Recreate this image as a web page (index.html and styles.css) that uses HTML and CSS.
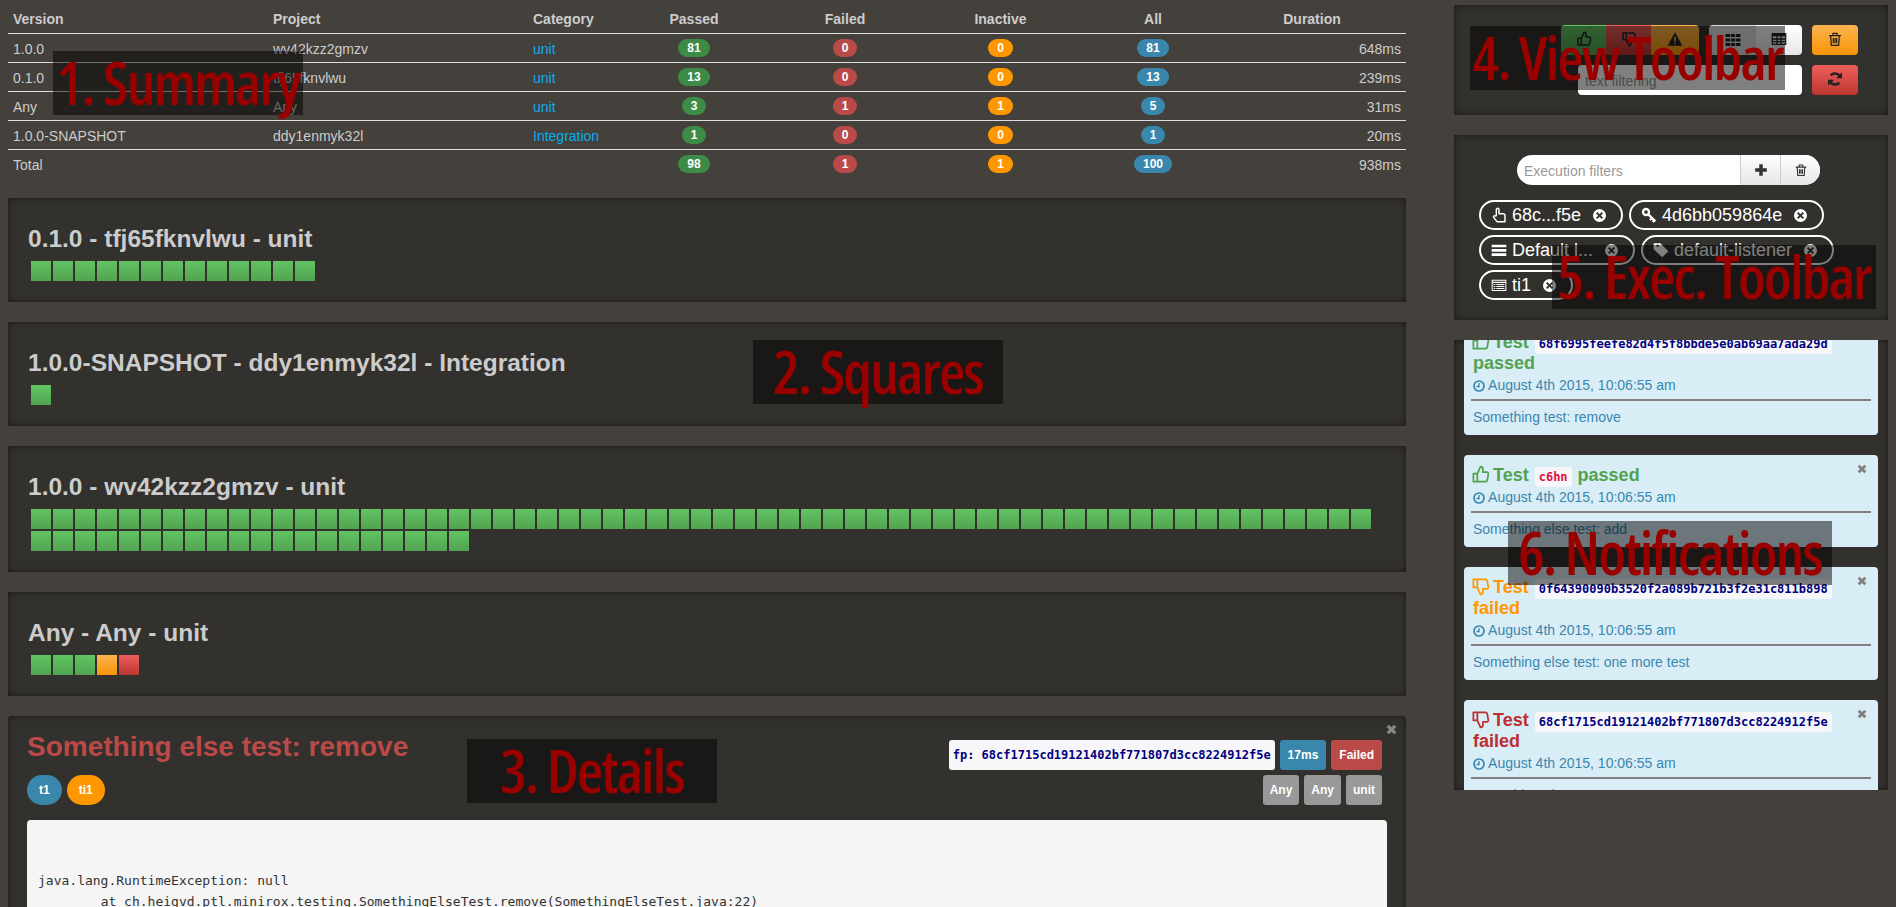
FILE: index.html
```html
<!DOCTYPE html>
<html lang="en">
<head>
    <meta charset="UTF-8">
    <meta name="viewport" content="width=device-width, initial-scale=1.0">
    <title>Test report</title>
    <link rel="stylesheet" href="styles.css">
</head>
<body>
    <!-- icon sprite -->
    <svg class="sprite" xmlns="http://www.w3.org/2000/svg">
        <symbol id="i-up" viewBox="0 0 24 24"><path d="M8 11v10H3V11zM8 11l4-9c1.800 0 3 1.300 3 3v4h5c1.300 0 2.100 1.100 1.900 2.300l-1.400 7.700c-.2 1.100-1 2-2.100 2H8" fill="none" stroke="currentColor" stroke-width="2.200" stroke-linejoin="round"/></symbol>
        <symbol id="i-down" viewBox="0 0 24 24"><path d="M8 13V3H3v10zM8 13l4 9c1.800 0 3-1.300 3-3v-4h5c1.300 0 2.100-1.100 1.900-2.300L20.500 5c-.2-1.100-1-2-2.100-2H8" fill="none" stroke="currentColor" stroke-width="2.200" stroke-linejoin="round"/></symbol>
        <symbol id="i-warn" viewBox="0 0 24 24"><path fill-rule="evenodd" fill="currentColor" d="M12 2l11 20H1zM10.600 9l.4 7h2l.4-7zM11 17.500v2.500h2v-2.500z"/></symbol>
        <symbol id="i-th" viewBox="0 0 24 24"><path fill="currentColor" d="M2 4h6v4H2zM9 4h6v4H9zM16 4h6v4h-6zM2 10h6v4H2zM9 10h6v4H9zM16 10h6v4h-6zM2 16h6v4H2zM9 16h6v4H9zM16 16h6v4h-6z"/></symbol>
        <symbol id="i-table" viewBox="0 0 24 24"><path fill-rule="evenodd" fill="currentColor" d="M1 3h22v18H1zM3 8v3h5V8zM10 8v3h4V8zM16 8v3h5V8zM3 13v2h5v-2zM10 13v2h4v-2zM16 13v2h5v-2zM3 17v2h5v-2zM10 17v2h4v-2zM16 17v2h5v-2z"/></symbol>
        <symbol id="i-trash" viewBox="0 0 24 24"><path d="M3 7h18M9 7V3.500h6V7M5.500 7l1 14.500h11l1-14.500M9.500 10.500v8M12 10.500v8M14.500 10.500v8" fill="none" stroke="currentColor" stroke-width="1.900"/></symbol>
        <symbol id="i-refresh" viewBox="0 0 24 24"><path d="M20 10A8.500 8.500 0 0 0 5.500 6.500M4 14a8.500 8.500 0 0 0 14.500 3.500" fill="none" stroke="currentColor" stroke-width="3.600"/><path fill="currentColor" d="M22.500 2v9h-9zM1.500 22v-9h9z"/></symbol>
        <symbol id="i-plus" viewBox="0 0 24 24"><path fill="currentColor" d="M9 2h6v7h7v6h-7v7H9v-7H2V9h7z"/></symbol>
        <symbol id="i-hand" viewBox="0 0 24 24"><path d="M8 13V4a2 2 0 0 1 4 0v6h6a3 3 0 0 1 3 3v9H9l-5-6.500c-1-1.500 1-3.300 2.500-1.900z" fill="none" stroke="currentColor" stroke-width="2.200" stroke-linejoin="round"/></symbol>
        <symbol id="i-key" viewBox="0 0 24 24"><circle cx="7.500" cy="7.500" r="4.500" fill="none" stroke="currentColor" stroke-width="3.400"/><path d="M11 11l10.500 10.500M16.500 16.500l-3 3M20 20l-2.500 2.500" fill="none" stroke="currentColor" stroke-width="3.400"/></symbol>
        <symbol id="i-bars" viewBox="0 0 24 24"><path fill="currentColor" d="M1 4h22v4H1zM1 10.500h22v4H1zM1 17h22v4H1z"/></symbol>
        <symbol id="i-tag" viewBox="0 0 24 24"><path fill-rule="evenodd" fill="currentColor" d="M1 2h10l12 12-9 9L1 11zM5 5.500a1.800 1.800 0 1 0 3.600 0 1.800 1.800 0 1 0-3.600 0z"/></symbol>
        <symbol id="i-list" viewBox="0 0 24 24"><path fill-rule="evenodd" fill="currentColor" d="M1 4h22v17H1zM2.500 5.500V7h19V5.500zM2.500 9v10.500h19V9zM4 10.500h2.500V12H4zM8 10.500h12V12H8zM4 13.500h2.500V15H4zM8 13.500h12V15H8zM4 16.500h2.500V18H4zM8 16.500h12V18H8z"/></symbol>
        <symbol id="i-xc" viewBox="0 0 24 24"><path fill-rule="evenodd" fill="currentColor" d="M12 0a12 12 0 1 0 0 24 12 12 0 1 0 0-24zM8 5.500L12 9.500l4-4 2.500 2.500-4 4 4 4-2.500 2.500-4-4-4 4L5.500 16l4-4-4-4z"/></symbol>
        <symbol id="i-clock" viewBox="0 0 24 24"><circle cx="12" cy="12" r="10" fill="none" stroke="currentColor" stroke-width="3.400"/><path d="M12 6v7h-5" fill="none" stroke="currentColor" stroke-width="2.600"/></symbol>
        <symbol id="i-close" viewBox="0 0 24 24"><path d="M4 4l16 16M20 4L4 20" fill="none" stroke="currentColor" stroke-width="7"/></symbol>
    </svg>

    <div class="page">
        <div class="main">
            <table class="summary">
                <thead>
                    <tr>
                        <th class="col-version">Version</th>
                        <th class="col-project">Project</th>
                        <th class="col-category">Category</th>
                        <th class="col-passed">Passed</th>
                        <th class="col-failed">Failed</th>
                        <th class="col-inactive">Inactive</th>
                        <th class="col-all">All</th>
                        <th class="col-duration">Duration</th>
                    </tr>
                </thead>
                <tbody>
                    <tr>
                        <td>1.0.0</td><td>wv42kzz2gmzv</td><td><a href="#">unit</a></td>
                        <td class="mid"><span class="badge green">81</span></td>
                        <td class="mid"><span class="badge red">0</span></td>
                        <td class="mid"><span class="badge orange">0</span></td>
                        <td class="mid"><span class="badge blue">81</span></td>
                        <td class="end">648ms</td>
                    </tr>
                    <tr>
                        <td>0.1.0</td><td>tfj65fknvlwu</td><td><a href="#">unit</a></td>
                        <td class="mid"><span class="badge green">13</span></td>
                        <td class="mid"><span class="badge red">0</span></td>
                        <td class="mid"><span class="badge orange">0</span></td>
                        <td class="mid"><span class="badge blue">13</span></td>
                        <td class="end">239ms</td>
                    </tr>
                    <tr>
                        <td>Any</td><td>Any</td><td><a href="#">unit</a></td>
                        <td class="mid"><span class="badge green">3</span></td>
                        <td class="mid"><span class="badge red">1</span></td>
                        <td class="mid"><span class="badge orange">1</span></td>
                        <td class="mid"><span class="badge blue">5</span></td>
                        <td class="end">31ms</td>
                    </tr>
                    <tr>
                        <td>1.0.0-SNAPSHOT</td><td>ddy1enmyk32l</td><td><a href="#">Integration</a></td>
                        <td class="mid"><span class="badge green">1</span></td>
                        <td class="mid"><span class="badge red">0</span></td>
                        <td class="mid"><span class="badge orange">0</span></td>
                        <td class="mid"><span class="badge blue">1</span></td>
                        <td class="end">20ms</td>
                    </tr>
                    <tr>
                        <td>Total</td><td></td><td></td>
                        <td class="mid"><span class="badge green">98</span></td>
                        <td class="mid"><span class="badge red">1</span></td>
                        <td class="mid"><span class="badge orange">1</span></td>
                        <td class="mid"><span class="badge blue">100</span></td>
                        <td class="end">938ms</td>
                    </tr>
                </tbody>
            </table>

            <section class="well">
                <h3 class="well-title">0.1.0 - tfj65fknvlwu - unit</h3>
                <div class="squares" data-pass="13"></div>
            </section>
            <section class="well">
                <h3 class="well-title">1.0.0-SNAPSHOT - ddy1enmyk32l - Integration</h3>
                <div class="squares" data-pass="1"></div>
            </section>
            <section class="well">
                <h3 class="well-title">1.0.0 - wv42kzz2gmzv - unit</h3>
                <div class="squares" data-pass="81"></div>
            </section>
            <section class="well">
                <h3 class="well-title">Any - Any - unit</h3>
                <div class="squares" data-pass="3" data-warn="1" data-fail="1"></div>
            </section>

            <section class="well details">
                <svg class="icon details-close"><use href="#i-close"/></svg>
                <div class="details-head">
                    <div>
                        <h2 class="details-title">Something else test: remove</h2>
                        <div class="pills">
                            <span class="pill blue">t1</span>
                            <span class="pill orange">ti1</span>
                        </div>
                    </div>
                    <div class="details-meta">
                        <div class="meta-row">
                            <code class="fp">fp: 68cf1715cd19121402bf771807d3cc8224912f5e</code>
                            <span class="label blue">17ms</span>
                            <span class="label red">Failed</span>
                        </div>
                        <div class="meta-row">
                            <span class="label grey">Any</span>
                            <span class="label grey">Any</span>
                            <span class="label grey">unit</span>
                        </div>
                    </div>
                </div>
                <pre class="trace">


java.lang.RuntimeException: null
	at ch.heigvd.ptl.minirox.testing.SomethingElseTest.remove(SomethingElseTest.java:22)
</pre>
            </section>
        </div>

        <div class="side">
            <section class="well view-toolbar">
                <div class="tool-row">
                    <div class="btn-group">
                        <button class="btn btn-green"><svg class="icon"><use href="#i-up"/></svg></button>
                        <button class="btn btn-red"><svg class="icon"><use href="#i-down"/></svg></button>
                        <button class="btn btn-orange"><svg class="icon"><use href="#i-warn"/></svg></button>
                    </div>
                    <div class="btn-group">
                        <button class="btn btn-active"><svg class="icon icon-th"><use href="#i-th"/></svg></button>
                        <button class="btn btn-plain"><svg class="icon"><use href="#i-table"/></svg></button>
                    </div>
                    <button class="btn btn-orange btn-solo"><svg class="icon"><use href="#i-trash"/></svg></button>
                </div>
                <div class="tool-row">
                    <input class="text-filter" type="text" placeholder="text filtering">
                    <button class="btn btn-red btn-solo"><svg class="icon"><use href="#i-refresh"/></svg></button>
                </div>
            </section>

            <section class="well exec-toolbar">
                <div class="exec-search">
                    <input class="exec-input" type="text" placeholder="Execution filters">
                    <button class="exec-btn"><svg class="icon"><use href="#i-plus"/></svg></button>
                    <button class="exec-btn"><svg class="icon"><use href="#i-trash"/></svg></button>
                </div>
                <div class="tags">
                    <span class="tag"><svg class="icon"><use href="#i-hand"/></svg>68c...f5e<svg class="tag-x"><use href="#i-xc"/></svg></span>
                    <span class="tag"><svg class="icon"><use href="#i-key"/></svg>4d6bb059864e<svg class="tag-x"><use href="#i-xc"/></svg></span>
                    <span class="tag"><svg class="icon"><use href="#i-bars"/></svg>Default l...<svg class="tag-x"><use href="#i-xc"/></svg></span>
                    <span class="tag"><svg class="icon"><use href="#i-tag"/></svg>default-listener<svg class="tag-x"><use href="#i-xc"/></svg></span>
                    <span class="tag"><svg class="icon"><use href="#i-list"/></svg>ti1<svg class="tag-x"><use href="#i-xc"/></svg></span>
                </div>
            </section>

            <section class="well notifications">
                <div class="note note-first">
                    <svg class="icon note-close"><use href="#i-close"/></svg>
                    <h4 class="note-title text-pass"><svg class="icon"><use href="#i-up"/></svg> Test <code class="hash">68f6995feefe82d4f5f8bbde5e0ab69aa7ada29d</code> passed</h4>
                    <p class="note-date"><svg class="icon"><use href="#i-clock"/></svg> August 4th 2015, 10:06:55 am</p>
                    <hr class="note-rule">
                    <p class="note-body">Something test: remove</p>
                </div>
                <div class="note">
                    <svg class="icon note-close"><use href="#i-close"/></svg>
                    <h4 class="note-title text-pass"><svg class="icon"><use href="#i-up"/></svg> Test <code class="hash hash-red">c6hn</code> passed</h4>
                    <p class="note-date"><svg class="icon"><use href="#i-clock"/></svg> August 4th 2015, 10:06:55 am</p>
                    <hr class="note-rule">
                    <p class="note-body">Something else test: add</p>
                </div>
                <div class="note">
                    <svg class="icon note-close"><use href="#i-close"/></svg>
                    <h4 class="note-title text-warn"><svg class="icon"><use href="#i-down"/></svg> Test <code class="hash">0f64390090b3520f2a089b721b3f2e31c811b898</code> failed</h4>
                    <p class="note-date"><svg class="icon"><use href="#i-clock"/></svg> August 4th 2015, 10:06:55 am</p>
                    <hr class="note-rule">
                    <p class="note-body">Something else test: one more test</p>
                </div>
                <div class="note">
                    <svg class="icon note-close"><use href="#i-close"/></svg>
                    <h4 class="note-title text-fail"><svg class="icon"><use href="#i-down"/></svg> Test <code class="hash">68cf1715cd19121402bf771807d3cc8224912f5e</code> failed</h4>
                    <p class="note-date"><svg class="icon"><use href="#i-clock"/></svg> August 4th 2015, 10:06:55 am</p>
                    <hr class="note-rule">
                    <p class="note-body">Something else test: remove</p>
                </div>
            </section>
        </div>
    </div>

    <!-- numbered callouts laid over the screenshot -->
    <div class="callout callout-1">1. Summary</div>
    <div class="callout callout-2">2. Squares</div>
    <div class="callout callout-3">3. Details</div>
    <div class="callout callout-4">4. View Toolbar</div>
    <div class="callout callout-5">5. Exec. Toolbar</div>
    <div class="callout callout-6">6. Notifications</div>

    <script>
        // Fill each squares row from its counts
        document.querySelectorAll('.squares').forEach(function (row) {
            const kinds = [['pass', row.dataset.pass], ['warn', row.dataset.warn], ['fail', row.dataset.fail]];
            kinds.forEach(function (kind) {
                for (let i = 0; i < (parseInt(kind[1]) || 0); i++) {
                    const square = document.createElement('span');
                    square.className = 'square square-' + kind[0];
                    row.appendChild(square);
                }
            });
        });
    </script>
</body>
</html>
```

FILE: styles.css
```css
html, body {
    height: 100%;
    margin: 0;
    overflow: hidden;
}

body {
    font-family: "Liberation Sans", Arial, sans-serif;
    font-size: 14px;
    color: #ccc;
    background-color: #44403b;
    position: relative;
}

.sprite {
    display: none;
}

.icon {
    width: 1em;
    height: 1em;
    vertical-align: -2px;
}

.page {
    display: grid;
    grid-template-columns: 1398px 434px;
    column-gap: 48px;
    padding: 5px 0 0 8px;
    align-items: start;
}

/* summary table */
.summary {
    width: 100%;
    table-layout: fixed;
    border-collapse: separate;
    border-spacing: 0;
    margin-bottom: 20px;
}

.summary th {
    box-sizing: border-box;
    height: 28px;
    padding: 0 5px;
    text-align: left;
    font-weight: bold;
}

.summary td {
    height: 29px;
    box-sizing: border-box;
    padding: 2px 5px 0;
    border-top: 1px solid #ddd;
}

.col-version, .col-project { width: 260px; }
.col-category { width: 83px; }
.col-passed { width: 166px; }
.col-failed { width: 136px; }
.col-inactive { width: 175px; }
.col-all { width: 130px; }

.summary th.col-passed, .summary th.col-failed, .summary th.col-inactive,
.summary th.col-all, .summary th.col-duration, .summary td.mid {
    text-align: center;
}

.summary td.mid {
    padding-top: 0;
}

.summary td.end {
    text-align: right;
}

.summary a {
    color: #08aef0;
    text-decoration: none;
}

.badge {
    display: inline-block;
    padding: 3px 9px;
    font-size: 12px;
    line-height: 12px;
    font-weight: bold;
    color: white;
    border-radius: 10px;
    vertical-align: 1px;
}

.green { background-color: #3e8a47; }
.red { background-color: #b94a48; }
.orange { background-color: #ff9800; }
.blue { background-color: #3a87ad; }
.grey { background-color: #999; }

/* wells */
.well {
    box-sizing: border-box;
    padding: 20px;
    margin-bottom: 20px;
    background-color: #33312d;
    box-shadow: inset 0 0 6px #191816;
}

.well-title {
    margin: 0;
    font-size: 24.5px;
    line-height: 42px;
    color: #ccc;
}

.squares {
    display: flex;
    flex-wrap: wrap;
    margin-left: 2px;
}

.square {
    width: 20px;
    height: 20px;
    margin: 1px;
}

.square-pass { background-image: linear-gradient(#62c462, #51a351); }
.square-warn { background-image: linear-gradient(#fbb450, #f89406); }
.square-fail { background-image: linear-gradient(#ee5f5b, #bd362f); }

/* details */
.details {
    position: relative;
    padding: 16px 19px 40px;
    border-radius: 4px;
}

.details-close {
    position: absolute;
    top: 8px;
    right: 9px;
    font-size: 11px;
    color: #888;
}

.details-head {
    display: flex;
    justify-content: space-between;
}

.details-title {
    margin: 0;
    font-size: 28px;
    line-height: 30px;
    color: #b94a48;
}

.pills {
    display: flex;
    gap: 5px;
    margin-top: 13px;
}

.pill {
    padding: 0 12px;
    font-size: 12px;
    line-height: 30px;
    font-weight: bold;
    color: white;
    border-radius: 15px;
}

.details-meta {
    display: flex;
    flex-direction: column;
    gap: 5px;
    padding: 8px 5px 0 0;
}

.meta-row {
    display: flex;
    justify-content: flex-end;
    gap: 5px;
}

.fp {
    padding: 0 4px;
    font-family: "DejaVu Sans Mono", monospace;
    font-size: 12px;
    line-height: 30px;
    font-weight: bold;
    color: #000080;
    background-color: #f7f7f9;
    border-radius: 3px;
}

.label {
    padding: 0 8px;
    font-size: 12px;
    line-height: 30px;
    font-weight: bold;
    color: white;
    border-radius: 3px;
}

.label.grey {
    padding: 0 7px;
}

.trace {
    margin: 15px 0 0;
    padding: 10px 11px 30px;
    font-family: "DejaVu Sans Mono", monospace;
    font-size: 13px;
    line-height: 20.5px;
    color: #333;
    background-color: #f5f5f5;
    border-radius: 4px;
}

/* right column toolbars */
.view-toolbar {
    display: flex;
    flex-direction: column;
    align-items: flex-end;
    gap: 10px;
    height: 110px;
    padding: 20px 30px;
}

.tool-row {
    display: flex;
    gap: 10px;
}

.btn-group {
    display: flex;
}

.btn {
    height: 30px;
    padding: 0;
    border: none;
    font-size: 16px;
    color: #222;
}

.icon-th {
    font-size: 18px;
    vertical-align: -4px;
}

.btn-group .btn:first-child {
    border-radius: 4px 0 0 4px;
}

.btn-group .btn:last-child {
    border-radius: 0 4px 4px 0;
}

.btn-green { width: 45px; background-image: linear-gradient(#62c462, #51a351); }
.btn-group .btn-red { width: 45px; }
.btn-group .btn-orange { width: 48px; }
.btn-red { background-image: linear-gradient(#ee5f5b, #bd362f); }
.btn-orange { background-image: linear-gradient(#fbb450, #f89406); }
.btn-active { width: 47px; background-color: #dcdcdc; }
.btn-plain { width: 46px; background-image: linear-gradient(#fff, #e6e6e6); }

.btn-solo {
    width: 46px;
    border-radius: 4px;
}

.text-filter {
    box-sizing: border-box;
    width: 224px;
    height: 30px;
    padding: 2px 7px 0;
    border: none;
    border-radius: 4px;
    font-family: inherit;
    font-size: 14px;
    background-color: white;
}

.text-filter::placeholder, .exec-input::placeholder {
    color: #999;
}

.exec-toolbar {
    height: 185px;
    padding: 20px 25px;
}

.exec-search {
    display: flex;
    width: 303px;
    height: 30px;
    margin-left: 38px;
}

.exec-input {
    box-sizing: border-box;
    flex: 1;
    min-width: 0;
    padding: 2px 7px 0;
    border: none;
    border-radius: 15px 0 0 15px;
    font-family: inherit;
    font-size: 14px;
    background-color: white;
}

.exec-btn {
    width: 40px;
    padding: 0;
    border: none;
    border-left: 1px solid #ccc;
    font-size: 14px;
    color: #333;
    background-image: linear-gradient(#fff, #e6e6e6);
}

.exec-btn:last-child {
    border-radius: 0 15px 15px 0;
}

.tags {
    display: flex;
    flex-wrap: wrap;
    gap: 5px 6px;
    margin-top: 15px;
}

.tag {
    box-sizing: border-box;
    display: flex;
    align-items: center;
    height: 30px;
    padding: 0 15px 0 11px;
    font-size: 18px;
    color: white;
    border: 2px solid white;
    border-radius: 15px;
}

.tag .icon {
    width: 16px;
    height: 16px;
    margin: 0 5px 0 -1px;
}

.tag-x {
    width: 13px;
    height: 13px;
    margin-left: 12px;
}

/* notifications */
.notifications {
    height: 450px;
    padding: 0 10px;
    overflow: hidden;
}

.note {
    position: relative;
    box-sizing: border-box;
    padding: 10px 7px 9px;
    margin-bottom: 20px;
    color: #3a87ad;
    background-color: #d9edf7;
    border-radius: 4px;
}

.note-first {
    margin-top: -18px;
}

.note-close {
    position: absolute;
    top: 9px;
    right: 11px;
    font-size: 10px;
    color: #808080;
}

.note-title {
    margin: 0;
    padding-left: 2px;
    font-size: 18px;
    line-height: 21px;
}

.note-title .icon {
    width: 19px;
    height: 19px;
    margin: 0 -2px;
    vertical-align: -3px;
}

.text-pass { color: #51a351; }
.text-warn { color: #ff9800; }
.text-fail { color: #bd2f2f; }

.hash {
    padding: 3px 4px;
    margin: 0 1px;
    font-family: "DejaVu Sans Mono", monospace;
    font-size: 12px;
    line-height: 1;
    font-weight: bold;
    color: #000080;
    background-color: #f7f7f9;
    border-radius: 3px;
}

.hash-red {
    color: #dd1144;
}

.note-date {
    margin: 1px 0 0;
    padding-left: 2px;
    line-height: 20px;
}

.note-date .icon {
    width: 12px;
    height: 12px;
}

.note-rule {
    height: 2px;
    margin: 4px 0 7px;
    border: none;
    background-color: #808080;
}

.note-body {
    margin: 0;
    padding-left: 2px;
    line-height: 18px;
}

/* numbered callouts */
.callout {
    position: absolute;
    height: 64px;
    line-height: 62px;
    text-align: center;
    white-space: nowrap;
    font-family: "Open Sans", sans-serif;
    font-size: 60px;
    font-weight: 600;
    font-stretch: 75%;
    letter-spacing: -1.8px;
    color: #990000;
    background-color: rgba(0, 0, 0, 0.5);
}

.callout-1 { left: 53px; top: 51px; width: 250px; }
.callout-2 { left: 753px; top: 340px; width: 250px; }
.callout-3 { left: 467px; top: 739px; width: 250px; }
.callout-4 { left: 1470px; top: 26px; width: 315px; }
.callout-5 { left: 1552px; top: 245px; width: 324px; }
.callout-6 { left: 1508px; top: 521px; width: 324px; }
```
